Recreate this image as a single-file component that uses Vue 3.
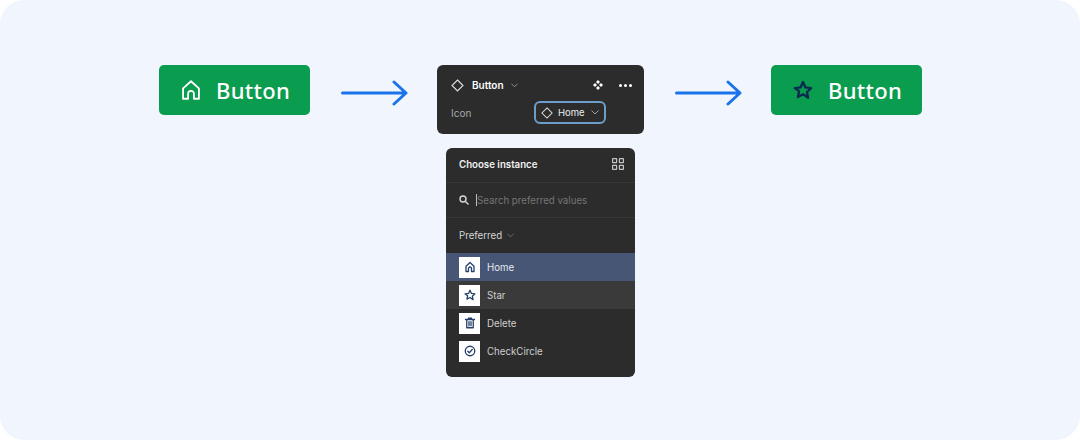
<template>
  <div class="page">
    <div class="flow">
      <div class="demo-btn">
        <svg class="demo-icon" viewBox="0 0 24 24" fill="none" stroke="#fff" stroke-width="2.200" stroke-linejoin="round">
          <path d="M2.500 22.500V10L12 1.500 21.500 10v12.500h-6v-6a3.500 3.500 0 0 0-7 0v6z" />
        </svg>
        <span>Button</span>
      </div>

      <svg class="arrow" width="67" height="26" viewBox="0 0 67 26" fill="none" stroke="#1a73e8" stroke-width="3" stroke-linecap="round" stroke-linejoin="round">
        <path d="M1.500 13h63M53 2l12 11-12 11" />
      </svg>

      <div class="center">
        <div class="props">
          <div class="props-row head">
            <svg class="diamond" width="13" height="13" viewBox="0 0 13 13"><path d="M6.500 1 12 6.500 6.500 12 1 6.500z" /></svg>
            <b class="comp-name">Button</b>
            <svg class="chev" width="7" height="5" viewBox="0 0 8 5"><path d="M.5.500 4 4 7.500.500" /></svg>
            <svg class="move" width="10" height="10" viewBox="0 0 10 10" fill="#fff">
              <path d="M5 0l2 2-2 2-2-2zM5 6l2 2-2 2-2-2zM2 3l2 2-2 2-2-2zM8 3l2 2-2 2-2-2z" />
            </svg>
            <span class="dots"><i></i><i></i><i></i></span>
          </div>
          <div class="props-row">
            <span class="prop-label">Icon</span>
            <div class="swap">
              <svg class="diamond" width="12" height="12" viewBox="0 0 13 13"><path d="M6.500 1 12 6.500 6.500 12 1 6.500z" /></svg>
              <span>Home</span>
              <svg class="chev" width="8" height="5" viewBox="0 0 8 5"><path d="M.5.500 4 4 7.500.500" /></svg>
            </div>
          </div>
        </div>

        <div class="menu">
          <div class="menu-title">
            <b>Choose instance</b>
            <svg width="12" height="12" viewBox="0 0 12 12" fill="none" stroke="#c4c4c4" stroke-width="1.200">
              <rect x=".6" y=".6" width="4" height="4" rx=".4" />
              <rect x="7.400" y=".6" width="4" height="4" rx=".4" />
              <rect x=".6" y="7.400" width="4" height="4" rx=".4" />
              <rect x="7.400" y="7.400" width="4" height="4" rx=".4" />
            </svg>
          </div>
          <div class="menu-search">
            <svg width="10" height="10" viewBox="0 0 10 10" fill="none" stroke="#d6d6d6" stroke-width="1.400">
              <circle cx="4" cy="4" r="3" /><path d="M6.200 6.200 9.500 9.500" />
            </svg>
            <span class="caret"></span>
            <span class="placeholder">Search preferred values</span>
          </div>
          <div class="menu-filter">
            <span>Preferred</span>
            <svg class="chev dim" width="7" height="5" viewBox="0 0 8 5"><path d="M.5.500 4 4 7.500.500" /></svg>
          </div>
          <div class="menu-list">
            <div v-for="item in items" :key="item.name" class="menu-item" :class="item.state">
              <div class="thumb">
                <svg width="12" height="12" viewBox="0 0 24 24" fill="none" stroke="#26406b" stroke-width="2.600" stroke-linejoin="round" stroke-linecap="round">
                  <path v-for="d in item.paths" :key="d" :d="d" />
                </svg>
              </div>
              <span>{{ item.name }}</span>
            </div>
          </div>
        </div>
      </div>

      <svg class="arrow" width="67" height="26" viewBox="0 0 67 26" fill="none" stroke="#1a73e8" stroke-width="3" stroke-linecap="round" stroke-linejoin="round">
        <path d="M1.500 13h63M53 2l12 11-12 11" />
      </svg>

      <div class="demo-btn">
        <svg class="demo-icon" viewBox="0 0 24 24" fill="none" stroke="#0b2a4f" stroke-width="2.800" stroke-linejoin="round">
          <path d="M12 2.500l2.900 6.400 6.900.8-5.100 4.700 1.400 6.900L12 17l-6.100 3.300 1.400-6.900L2.200 9.700l6.900-.8z" />
        </svg>
        <span>Button</span>
      </div>
    </div>
  </div>
</template>

<script setup>
const items = [
  { name: 'Home', state: 'selected', paths: ['M4 21V10.500L12 3l8 7.500V21h-5v-6a3 3 0 0 0-6 0v6z'] },
  { name: 'Star', state: 'hover', paths: ['M12 2.500l2.900 6.400 6.900.8-5.100 4.700 1.400 6.900L12 17l-6.100 3.300 1.400-6.900L2.200 9.700l6.900-.8z'] },
  { name: 'Delete', state: '', paths: ['M3 5h18M9 5V2.500h6V5M5.500 5v16.500h13V5M10 9.500v8M14 9.500v8'] },
  { name: 'CheckCircle', state: '', paths: ['M12 2.500a9.500 9.500 0 1 0 0 19 9.500 9.500 0 0 0 0-19z', 'M7.500 12.500l3 3 6-6.500'] },
]
</script>

<style>
html, body {
  background: #fff;
}
</style>

<style scoped>
.page {
  width: 1080px;
  height: 440px;
  box-sizing: border-box;
  padding: 65px 0 0 1px;
  background: #f1f6fe;
  border-radius: 24px;
  font-family: Inter, "Liberation Sans", sans-serif;
  overflow: hidden;
}

.flow {
  display: flex;
  justify-content: center;
  align-items: flex-start;
}

.demo-btn {
  width: 151px;
  height: 50px;
  box-sizing: border-box;
  padding-left: 2px;
  display: flex;
  align-items: center;
  justify-content: center;
  gap: 15px;
  background: #0a9c4f;
  border-radius: 5px;
  color: #fff;
  font-family: "Noto Sans", "Open Sans", sans-serif;
  font-size: 22px;
  font-weight: 500;
  letter-spacing: 0.3px;
}

.demo-icon {
  width: 20px;
  height: 20px;
}

.arrow {
  margin-top: 15px;
}
.arrow:nth-child(2) {
  margin-left: 31px;
  margin-right: 29px;
}
.arrow:nth-child(4) {
  margin-left: 31px;
  margin-right: 29px;
}

.center {
  width: 207px;
  display: flex;
  flex-direction: column;
  align-items: center;
  gap: 14px;
}

.props {
  width: 100%;
  height: 69px;
  box-sizing: border-box;
  padding: 12px 12px 0 14px;
  background: #2c2c2c;
  border-radius: 6px;
  display: flex;
  flex-direction: column;
  gap: 8px;
  color: #fff;
  font-size: 10px;
}

.props-row {
  display: flex;
  align-items: center;
  justify-content: space-between;
}

.head {
  justify-content: flex-start;
  height: 16px;
}

.diamond {
  fill: none;
  stroke: #e0e0e0;
  stroke-width: 1.100;
  flex: none;
}

.chev {
  fill: none;
  stroke: #a0a0a0;
  stroke-width: 1;
  flex: none;
}
.chev.dim {
  stroke: #777;
}

.comp-name {
  margin-left: 8px;
  font-weight: 600;
}
.head .chev {
  margin-left: 7px;
}

.move {
  margin-left: auto;
}

.dots {
  display: flex;
  gap: 2px;
  margin-left: 16px;
}
.dots i {
  width: 3px;
  height: 3px;
  border-radius: 50%;
  background: #fff;
}

.prop-label {
  color: #a9a9a9;
}

.swap {
  width: 72px;
  height: 23px;
  box-sizing: border-box;
  margin-right: 26px;
  padding: 0 5px;
  display: flex;
  align-items: center;
  gap: 5px;
  border: 2px solid #6d9dcb;
  border-radius: 6px;
  color: #eee;
  font-size: 9.500px;
}
.swap .chev {
  margin-left: auto;
}

.menu {
  width: 189px;
  height: 229px;
  background: #2c2c2c;
  border-radius: 6px;
  color: #e6e6e6;
  font-size: 9.700px;
  overflow: hidden;
}

.menu-title {
  height: 35px;
  box-sizing: border-box;
  padding: 0 11px 2px 13px;
  display: flex;
  align-items: center;
  justify-content: space-between;
  border-bottom: 1px solid #383838;
  color: #f2f2f2;
}
.menu-title b {
  font-weight: 600;
}

.menu-search {
  height: 35px;
  box-sizing: border-box;
  padding-left: 13px;
  display: flex;
  align-items: center;
  border-bottom: 1px solid #383838;
}

.caret {
  width: 1px;
  height: 12px;
  margin-left: 7px;
  background: #bdbdbd;
}

.placeholder {
  color: #757575;
}

.menu-filter {
  height: 35px;
  padding-left: 13px;
  display: flex;
  align-items: center;
  gap: 5px;
  color: #d6d6d6;
}

.menu-list {
  display: flex;
  flex-direction: column;
}

.menu-item {
  height: 28px;
  padding-left: 13px;
  display: flex;
  align-items: center;
  gap: 7px;
  color: #cfcfcf;
}
.menu-item.selected {
  background: #475674;
  color: #e4e8f0;
}
.menu-item.hover {
  background: #3a3a3a;
}

.thumb {
  width: 21px;
  height: 21px;
  background: #fff;
  display: flex;
  align-items: center;
  justify-content: center;
}
</style>
